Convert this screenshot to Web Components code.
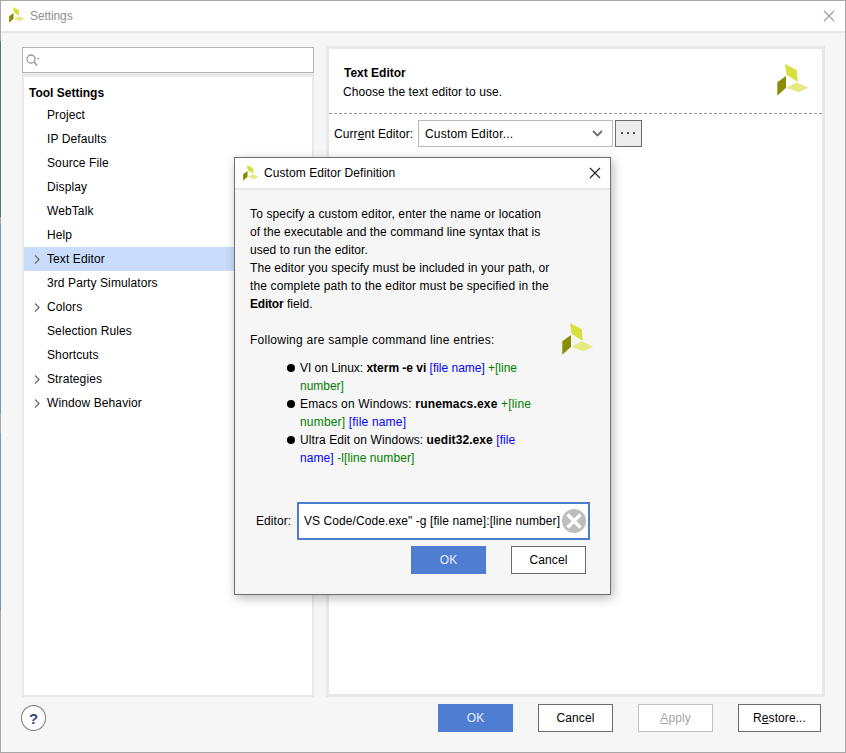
<!DOCTYPE html>
<html>
<head>
<meta charset="utf-8">
<title>Settings</title>
<style>
  html, body { margin: 0; height: 100%; background: #f6f6f6; }
  body { font: 12px "Liberation Sans", Arial, sans-serif; color: #000; overflow: hidden; }
</style>
</head>
<body>

<settings-window>
  <settings-tree slot="left">
    <tree-item head>Tool Settings</tree-item>
    <tree-item>Project</tree-item>
    <tree-item>IP Defaults</tree-item>
    <tree-item>Source File</tree-item>
    <tree-item>Display</tree-item>
    <tree-item>WebTalk</tree-item>
    <tree-item>Help</tree-item>
    <tree-item arrow selected>Text Editor</tree-item>
    <tree-item>3rd Party Simulators</tree-item>
    <tree-item arrow>Colors</tree-item>
    <tree-item>Selection Rules</tree-item>
    <tree-item>Shortcuts</tree-item>
    <tree-item arrow>Strategies</tree-item>
    <tree-item arrow>Window Behavior</tree-item>
  </settings-tree>
  <editor-page slot="right"></editor-page>
  <editor-dialog slot="overlay"></editor-dialog>
</settings-window>

<script>
const LOGO = `<svg viewBox="0 0 32 32" width="100%" height="100%" style="display:block">
  <polygon points="8,0 19.7,6 20.7,17.7 9.7,11" fill="#d6e03c"/>
  <polygon points="0.3,18.3 9,12 9,23.7 0.3,31.7" fill="#8a8c00"/>
  <polygon points="9.7,23.7 19.7,18.3 31.3,23.7 21.3,28.3" fill="#e4ea80"/>
</svg>`;

class AppLogo extends HTMLElement {
  constructor() {
    super();
    this.attachShadow({ mode: "open" });
  }
  connectedCallback() {
    const size = this.getAttribute("size") || 32;
    this.shadowRoot.innerHTML = `
      <style>:host { display: block; width: ${size}px; height: ${size}px; flex: none; }</style>
      ${LOGO}`;
  }
}

class UiButton extends HTMLElement {
  constructor() {
    super();
    this.attachShadow({ mode: "open" });
    this.shadowRoot.innerHTML = `
      <style>
        :host {
          display: flex; align-items: center; justify-content: center;
          box-sizing: border-box; width: 75px; height: 28px; flex: none;
          border: 1px solid #6b6b6b; background: #fff; color: #000;
          font-size: 12px; letter-spacing: .08px;
        }
        :host([primary]) { background: #4f7dd1; border-color: #4f7dd1; color: #e8eefa; }
        :host([disabled]) { border-color: #c2c2c2; color: #a6a6a6; }
      </style>
      <slot></slot>`;
  }
}

class TreeItem extends HTMLElement {
  constructor() {
    super();
    this.attachShadow({ mode: "open" });
  }
  connectedCallback() {
    const arrow = this.hasAttribute("arrow")
      ? `<svg class="arrow" width="7" height="11" viewBox="0 0 7 11"><path d="M1 1.5l4 4-4 4" fill="none" stroke="#707070" stroke-width="1.3"/></svg>`
      : "";
    this.shadowRoot.innerHTML = `
      <style>
        :host {
          display: flex; align-items: center; height: 24px; padding-left: 23px; box-sizing: border-box;
          position: relative; letter-spacing: .1px;
        }
        :host([head]) { padding: 3px 0 0 5px; font-weight: bold; letter-spacing: 0; }
        :host([selected]) { background: #c9dcfb; }
        .arrow { position: absolute; left: 10px; top: 7px; }
      </style>
      ${arrow}<slot></slot>`;
  }
}

class SettingsTree extends HTMLElement {
  constructor() {
    super();
    this.attachShadow({ mode: "open" });
    this.shadowRoot.innerHTML = `
      <style>
        :host { display: flex; flex-direction: column; height: 100%; }
        .search {
          box-sizing: border-box; height: 26px; flex: none; margin-top: 1px;
          border: 1px solid #b4b4b4; background: #fff; display: flex; align-items: center; padding-left: 2px;
        }
        .list {
          flex: 1; box-sizing: border-box;
          border: 2px solid #e8e8e8; border-top-width: 4px; background: #fff; padding-top: 2px;
        }
      </style>
      <div class="search">
        <svg width="16" height="14" viewBox="0 0 16 14">
          <circle cx="6" cy="6" r="4" fill="none" stroke="#999" stroke-width="1.3"/>
          <path d="M9 9l3 3.5" stroke="#999" stroke-width="1.5"/>
          <path d="M11.5 5h3l-1.5 1.6z" fill="#999"/>
        </svg>
      </div>
      <div class="list"><slot></slot></div>`;
  }
}

class EditorPage extends HTMLElement {
  constructor() {
    super();
    this.attachShadow({ mode: "open" });
    this.shadowRoot.innerHTML = `
      <style>
        :host {
          display: block; height: 100%; box-sizing: border-box;
          border: 3px solid #e8e8e8; background: #fff; letter-spacing: .08px;
        }
        .head {
          display: flex; justify-content: space-between; height: 65px; box-sizing: border-box;
          padding: 15px 13px 0 14px; border-bottom: 1px dashed #9a9a9a;
        }
        .title { font-weight: bold; padding-left: 1px; line-height: 18px; letter-spacing: 0; }
        .sub { line-height: 18px; margin-top: 1px; }
        .row { display: flex; align-items: center; padding: 6px 0 0 5px; }
        .label { width: 84px; flex: none; }
        u { text-underline-offset: 1px; }
        .combo {
          box-sizing: border-box; width: 195px; height: 27px; flex: none;
          border: 1px solid #b8b8b8; display: flex; align-items: center;
          justify-content: space-between; padding: 0 9px 0 6px; letter-spacing: .18px;
        }
        .dots {
          box-sizing: border-box; width: 27px; height: 27px; margin-left: 2px; flex: none;
          border: 1px solid #6b6b6b; background: #ececec; display: flex; align-items: center; justify-content: center;
        }
      </style>
      <div class="head">
        <div>
          <div class="title">Text Editor</div>
          <div class="sub">Choose the text editor to use.</div>
        </div>
        <app-logo></app-logo>
      </div>
      <div class="row">
        <div class="label">Curr<u>e</u>nt Editor:</div>
        <div class="combo">
          <span>Custom Editor...</span>
          <svg width="11" height="7" viewBox="0 0 11 7"><path d="M1 1l4.5 4.5L10 1" fill="none" stroke="#6e6e6e" stroke-width="1.8"/></svg>
        </div>
        <div class="dots">
          <svg width="15" height="3" viewBox="0 0 15 3" style="display:block"><path d="M0 0h2v2H0zM6 0h2v2H6zM12 0h2v2h-2z" fill="#555"/></svg>
        </div>
      </div>`;
  }
}

class EditorDialog extends HTMLElement {
  constructor() {
    super();
    this.attachShadow({ mode: "open" });
    this.shadowRoot.innerHTML = `
      <style>
        :host {
          position: absolute; left: 233px; top: 156px; width: 377px; height: 438px;
          box-sizing: border-box; border: 1px solid #6f6f6f; background: #f6f6f6;
          box-shadow: 2px 3px 10px rgba(0,0,0,.28);
          display: flex; flex-direction: column; letter-spacing: .08px;
        }
        .bar {
          height: 30px; flex: none; background: #fff; border-bottom: 2px solid #e6e6e6;
          display: flex; align-items: center; padding: 0 9px 0 8px; gap: 5px;
        }
        .bar .name { flex: 1; }
        .text { padding: 15px 0 0 15px; line-height: 18px; position: relative; height: 312px; box-sizing: border-box; }
        .text p { margin: 0; }
        .gap { height: 18px; }
        .wide { letter-spacing: .13px; }
        .wider { letter-spacing: .25px; }
        ul { margin: 10px 0 0; padding: 0 0 0 50px; list-style: none; }
        li { position: relative; }
        li.tight { letter-spacing: -.02px; }
        li.loose { letter-spacing: .18px; }
        li::before {
          content: ""; position: absolute; left: -13px; top: 5px;
          width: 8px; height: 8px; border-radius: 50%; background: #000;
        }
        .text app-logo { position: absolute; left: 327px; top: 133px; }
        .blue { color: #0000ff; }
        .green { color: #008000; }
        .field { display: flex; align-items: center; padding-left: 21px; }
        .field .lbl { width: 41px; flex: none; }
        .input {
          box-sizing: border-box; width: 293px; height: 38px; flex: none;
          border: 2px solid #4d7cce; background: #fff;
          display: flex; align-items: center; padding: 0 2px 0 5px; justify-content: space-between;
          white-space: nowrap; overflow: hidden;
        }
        .btns { display: flex; justify-content: flex-end; gap: 25px; padding: 6px 24px 0 0; }
      </style>
      <div class="bar">
        <app-logo size="16"></app-logo>
        <span class="name">Custom Editor Definition</span>
        <svg width="12" height="12" viewBox="0 0 12 12"><path d="M1 1l10 10M11 1L1 11" stroke="#222" stroke-width="1.1"/></svg>
      </div>
      <div class="text">
        <p><span class="wide">To specify a custom editor, enter the name or location</span><br>
        of the executable and the command line syntax that is<br>
        used to run the editor.<br>
        The editor you specify must be included in your path, or<br>
        <span class="wide">the complete path to the editor must be specified in the</span><br>
        <b style="letter-spacing:-.2px">Editor</b> field.</p>
        <div class="gap"></div>
        <p class="wider">Following are sample command line entries:</p>
        <app-logo></app-logo>
        <ul>
          <li class="tight">VI on Linux: <b>xterm -e vi</b> <span class="blue">[file name]</span> <span class="green">+[line<br>number]</span></li>
          <li class="loose">Emacs on Windows: <b>runemacs.exe</b> <span class="green">+[line<br>number]</span> <span class="blue">[file name]</span></li>
          <li>Ultra Edit on Windows: <b>uedit32.exe</b> <span class="blue">[file<br>name]</span> <span class="green">-l[line number]</span></li>
        </ul>
      </div>
      <div class="field">
        <span class="lbl">Editor:</span>
        <div class="input">
          <span>VS Code/Code.exe" -g [file name]:[line number]</span>
          <svg width="24" height="24" viewBox="0 0 24 24" style="flex:none">
            <circle cx="12" cy="12" r="12" fill="#bdbdbd"/>
            <path d="M5.5 5.5l13 13M18.5 5.5l-13 13" stroke="#fff" stroke-width="3.4"/>
          </svg>
        </div>
      </div>
      <div class="btns">
        <ui-button primary>OK</ui-button>
        <ui-button>Cancel</ui-button>
      </div>`;
  }
}

class SettingsWindow extends HTMLElement {
  constructor() {
    super();
    this.attachShadow({ mode: "open" });
    this.shadowRoot.innerHTML = `
      <style>
        :host {
          display: flex; flex-direction: column; position: relative;
          width: 846px; height: 753px; box-sizing: border-box;
          border: 1px solid #a8a8a8; background: #f6f6f6;
        }
        /* desktop showing through the left window edge */
        .edge {
          position: absolute; left: -1px; top: 40px; width: 1px; height: 570px;
          background: linear-gradient(#4f7a78 0 176px, #a8a8a8 176px 183px, #7b98ad 183px 372px, #a8a8a8 372px 392px, #7b98ad 392px);
        }
        .bar {
          height: 30px; flex: none; background: #fff; border-bottom: 2px solid #e6e6e6;
          display: flex; align-items: center; padding: 0 10px 0 8px; gap: 5px; color: #8f8f8f; letter-spacing: -.1px;
        }
        .bar app-logo { margin-top: -2px; }
        .bar span { flex: 1; }
        .main {
          flex: 1; min-height: 0; display: grid; grid-template-columns: 292px 499px; gap: 12px;
          padding: 13px 0 0 21px;
        }
        .foot {
          height: 55px; box-sizing: border-box; flex: none; display: flex; align-items: flex-start;
          padding: 7px 24px 0 20px; gap: 25px;
        }
        .help {
          box-sizing: border-box; width: 25px; height: 26px; margin: 1px auto 0 0; border-radius: 50%;
          border: 1px solid #7a7a7a; background: #fff; color: #2f4b86;
          display: flex; align-items: center; justify-content: center; font-weight: bold; font-size: 15px;
        }
        ui-button.wide { width: 83px; }
      </style>
      <div class="edge"></div>
      <div class="bar">
        <app-logo size="16"></app-logo>
        <span>Settings</span>
        <svg width="12" height="12" viewBox="0 0 12 12"><path d="M1 1l10 10M11 1L1 11" stroke="#9a9a9a" stroke-width="1.1"/></svg>
      </div>
      <div class="main">
        <div><slot name="left"></slot></div>
        <div><slot name="right"></slot></div>
      </div>
      <div class="foot">
        <div class="help">?</div>
        <ui-button primary>OK</ui-button>
        <ui-button>Cancel</ui-button>
        <ui-button disabled><u>A</u>pply</ui-button>
        <ui-button class="wide">R<u>e</u>store...</ui-button>
      </div>
      <slot name="overlay"></slot>`;
  }
}

customElements.define("app-logo", AppLogo);
customElements.define("ui-button", UiButton);
customElements.define("tree-item", TreeItem);
customElements.define("settings-tree", SettingsTree);
customElements.define("editor-page", EditorPage);
customElements.define("editor-dialog", EditorDialog);
customElements.define("settings-window", SettingsWindow);
</script>
</body>
</html>
